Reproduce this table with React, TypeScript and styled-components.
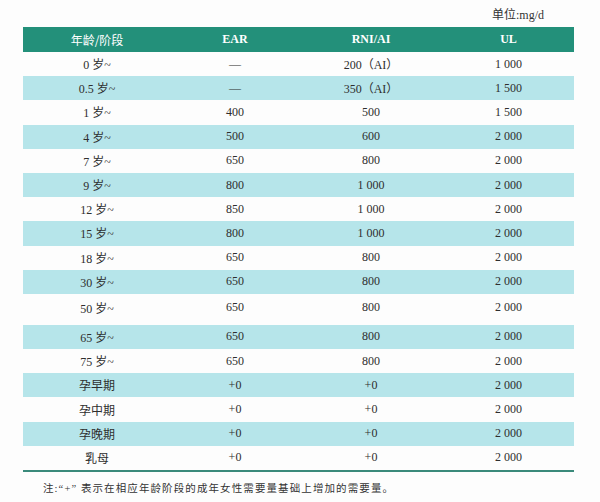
import React from "react";
import styled, { createGlobalStyle } from "styled-components";

const GlobalStyle = createGlobalStyle`
	html, body {
		margin: 0;
		padding: 0;
		background: #fdfdfd;
	}
	body {
		font-family: "Liberation Serif", "Noto Sans CJK SC", serif;
		color: #2e2e2e;
	}
`;

type Row = { age: string; ear: string; rni: string; ul: string; tall?: boolean };

const rows: Row[] = [
	{ age: "0 岁~", ear: "—", rni: "200（AI）", ul: "1 000" },
	{ age: "0.5 岁~", ear: "—", rni: "350（AI）", ul: "1 500" },
	{ age: "1 岁~", ear: "400", rni: "500", ul: "1 500" },
	{ age: "4 岁~", ear: "500", rni: "600", ul: "2 000" },
	{ age: "7 岁~", ear: "650", rni: "800", ul: "2 000" },
	{ age: "9 岁~", ear: "800", rni: "1 000", ul: "2 000" },
	{ age: "12 岁~", ear: "850", rni: "1 000", ul: "2 000" },
	{ age: "15 岁~", ear: "800", rni: "1 000", ul: "2 000" },
	{ age: "18 岁~", ear: "650", rni: "800", ul: "2 000" },
	{ age: "30 岁~", ear: "650", rni: "800", ul: "2 000" },
	{ age: "50 岁~", ear: "650", rni: "800", ul: "2 000", tall: true },
	{ age: "65 岁~", ear: "650", rni: "800", ul: "2 000" },
	{ age: "75 岁~", ear: "650", rni: "800", ul: "2 000" },
	{ age: "孕早期", ear: "+0", rni: "+0", ul: "2 000" },
	{ age: "孕中期", ear: "+0", rni: "+0", ul: "2 000" },
	{ age: "孕晚期", ear: "+0", rni: "+0", ul: "2 000" },
	{ age: "乳母", ear: "+0", rni: "+0", ul: "2 000" },
];

export default function App(): React.ReactElement {
	return (
		<>
			<GlobalStyle />
			<Page>
				<Unit>单位:mg/d</Unit>
				<Table>
					<HeadRow>
						<HeadCell $cjk>年龄/阶段</HeadCell>
						<HeadCell>EAR</HeadCell>
						<HeadCell>RNI/AI</HeadCell>
						<HeadCell>UL</HeadCell>
					</HeadRow>
					{rows.map((r, i) => (
						<BodyRow key={r.age} $band={i % 2 === 1} $tall={!!r.tall}>
							<Cell>{r.age}</Cell>
							<Cell>{r.ear}</Cell>
							<Cell>{r.rni}</Cell>
							<Cell>{r.ul}</Cell>
						</BodyRow>
					))}
				</Table>
				<Note>注:“+” 表示在相应年龄阶段的成年女性需要量基础上增加的需要量。</Note>
			</Page>
		</>
	);
}

const Page = styled.div`
	width: 551px;
	margin-left: 23px;
	display: flex;
	flex-direction: column;
`;

const Unit = styled.div`
	height: 27px;
	box-sizing: border-box;
	padding: 8px 30px 0 0;
	text-align: right;
	font-size: 12px;
	line-height: 14px;
	color: #333;
`;

const Table = styled.div`
	display: flex;
	flex-direction: column;
	border-bottom: 2px solid #3a8a7b;
`;

const columns = "148px 128px 144px 131px";

const HeadRow = styled.div`
	display: grid;
	grid-template-columns: ${columns};
	height: 25px;
	background: #23907a;
`;

const HeadCell = styled.div<{ $cjk?: boolean }>`
	display: flex;
	align-items: center;
	justify-content: center;
	color: #ffffff;
	font-size: 12px;
	font-weight: ${(p) => (p.$cjk ? 400 : 700)};
	font-family: ${(p) =>
		p.$cjk ? '"Noto Sans CJK SC", sans-serif' : '"Liberation Serif", serif'};
`;

const BodyRow = styled.div<{ $band: boolean; $tall: boolean }>`
	display: grid;
	grid-template-columns: ${columns};
	height: ${(p) => (p.$tall ? "31px" : "24.2px")};
	padding-bottom: ${(p) => (p.$tall ? "3px" : "0")};
	box-sizing: border-box;
	background: ${(p) => (p.$band ? "#b6e5ea" : "transparent")};
`;

const Cell = styled.div`
	display: flex;
	align-items: center;
	justify-content: center;
	font-size: 12px;
	color: #2e2e2e;
	white-space: nowrap;
`;

const Note = styled.div`
	padding: 10px 0 0 20px;
	font-size: 10.5px;
	letter-spacing: 1.1px;
	line-height: 14px;
	color: #333;
`;
